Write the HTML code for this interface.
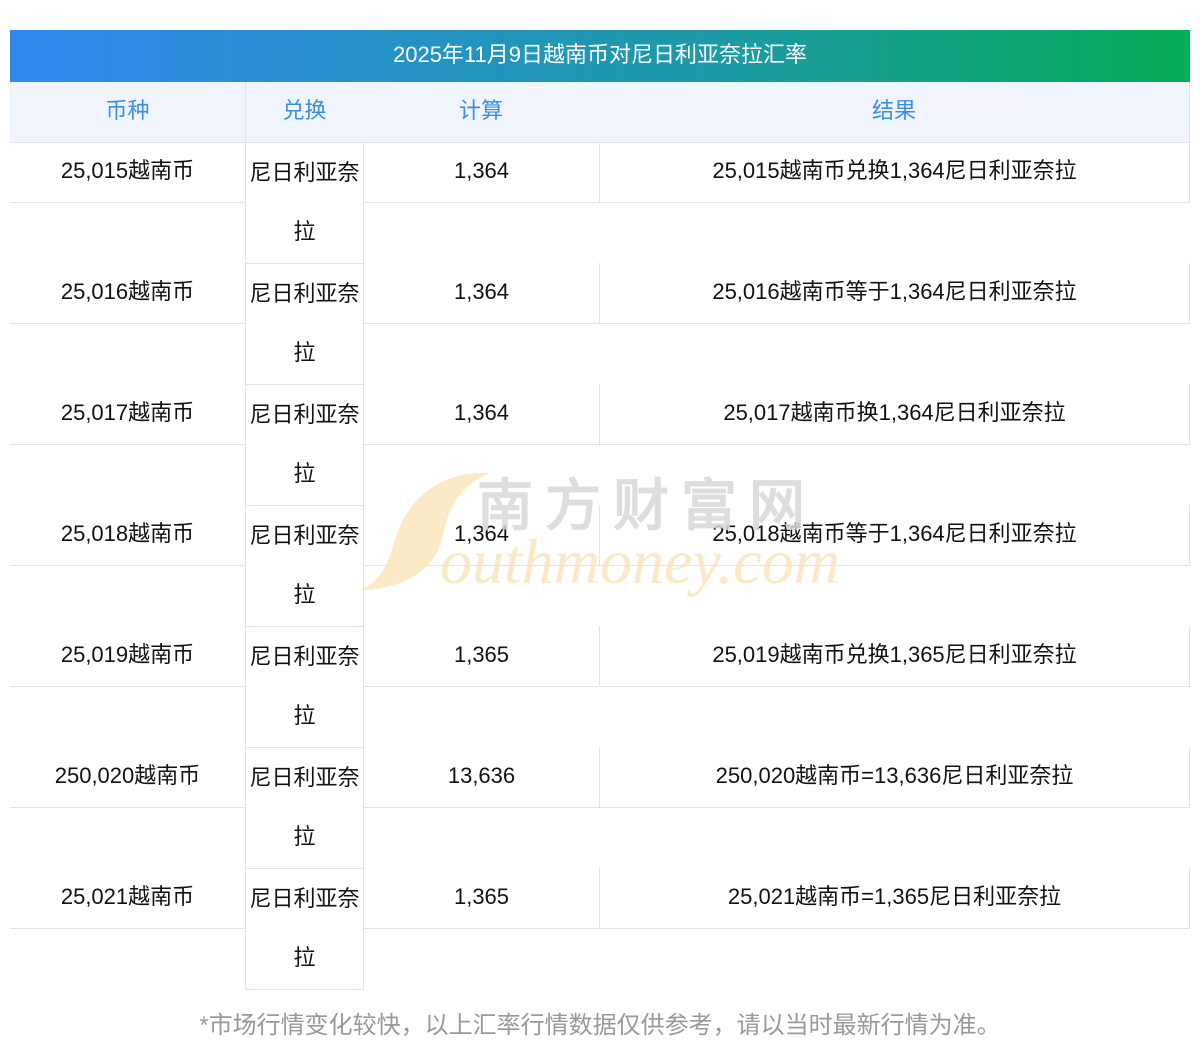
<!DOCTYPE html>
<html><head><meta charset="utf-8"><style>
body{margin:0;width:1200px;height:1056px;background:#fff;position:relative;font-family:"Liberation Sans","Noto Sans CJK SC",sans-serif;overflow:hidden}
.t{position:absolute;left:10px;top:30px;width:1180px;height:52px;background:linear-gradient(90deg,#2f88ef,#1d9aa6 60%,#07ad57);color:#fff;font-size:22px;line-height:50px;text-align:center}
.c{position:absolute;box-sizing:border-box;text-align:center;font-size:22px;line-height:58px;color:#111;white-space:nowrap}
.h{background:#f0f5fd;color:#3a8ee6;top:82px;height:61px;border-bottom:1px solid #dfe4ec;border-right:1px solid #dfe4ec}
.a{left:10px;width:235px;height:61px;border-bottom:1px solid #dfe4ec}
.b{left:245px;width:119px;height:122px;border:1px solid #dfe4ec;border-bottom:none;background:#fff;line-height:59px}
.d{left:363px;width:236px;height:61px;border-bottom:1px solid #dfe4ec;border-left:1px solid #dfe4ec}
.e{left:599px;width:591px;height:61px;border-bottom:1px solid #dfe4ec;border-left:1px solid #dfe4ec;border-right:1px solid #dfe4ec}
.wm{position:absolute;z-index:5;pointer-events:none}
.f{position:absolute;top:1005px;left:0;width:1200px;text-align:center;font-size:24px;color:#999}
</style></head><body>
<div class="t">2025年11月9日越南币对尼日利亚奈拉汇率</div>
<div class="c h" style="left:10px;width:236px">币种</div>
<div class="c h" style="left:245px;width:119px;border-left:1px solid #dfe4ec">兑换</div>
<div class="c h" style="left:363px;width:237px">计算</div>
<div class="c h" style="left:599px;width:591px">结果</div>

<div class="c a" style="top:142px">25,015越南币</div><div class="c d" style="top:142px">1,364</div><div class="c e" style="top:142px">25,015越南币兑换1,364尼日利亚奈拉</div><div class="c b" style="top:142px">尼日利亚奈<br>拉</div>
<div class="c a" style="top:263px">25,016越南币</div><div class="c d" style="top:263px">1,364</div><div class="c e" style="top:263px">25,016越南币等于1,364尼日利亚奈拉</div><div class="c b" style="top:263px">尼日利亚奈<br>拉</div>
<div class="c a" style="top:384px">25,017越南币</div><div class="c d" style="top:384px">1,364</div><div class="c e" style="top:384px">25,017越南币换1,364尼日利亚奈拉</div><div class="c b" style="top:384px">尼日利亚奈<br>拉</div>
<div class="c a" style="top:505px">25,018越南币</div><div class="c d" style="top:505px">1,364</div><div class="c e" style="top:505px">25,018越南币等于1,364尼日利亚奈拉</div><div class="c b" style="top:505px">尼日利亚奈<br>拉</div>
<div class="c a" style="top:626px">25,019越南币</div><div class="c d" style="top:626px">1,365</div><div class="c e" style="top:626px">25,019越南币兑换1,365尼日利亚奈拉</div><div class="c b" style="top:626px">尼日利亚奈<br>拉</div>
<div class="c a" style="top:747px">250,020越南币</div><div class="c d" style="top:747px">13,636</div><div class="c e" style="top:747px">250,020越南币=13,636尼日利亚奈拉</div><div class="c b" style="top:747px">尼日利亚奈<br>拉</div>
<div class="c a" style="top:868px">25,021越南币</div><div class="c d" style="top:868px">1,365</div><div class="c e" style="top:868px">25,021越南币=1,365尼日利亚奈拉</div><div class="c b" style="top:868px;border-bottom:1px solid #dfe4ec">尼日利亚奈<br>拉</div>

<svg class="wm" style="left:355px;top:465px" width="500" height="140" viewBox="0 0 500 140">
<path d="M135 8 C80 5 50 40 40 75 C30 110 20 118 5 125 C40 125 75 110 85 80 C92 55 95 25 135 8 Z" fill="#fbe3b8" opacity="0.8"/>
<text x="122" y="60" font-family="WenQuanYi Zen Hei,sans-serif" font-size="56" font-weight="bold" fill="#d8d8d8" opacity="0.85" letter-spacing="12">南方财富网</text>
<text x="85" y="118" font-family="Liberation Serif,serif" font-style="italic" font-size="64" fill="#fbe3b8" opacity="0.8">outhmoney.com</text>
</svg>
<div class="f">*市场行情变化较快，以上汇率行情数据仅供参考，请以当时最新行情为准。</div>
</body></html>
